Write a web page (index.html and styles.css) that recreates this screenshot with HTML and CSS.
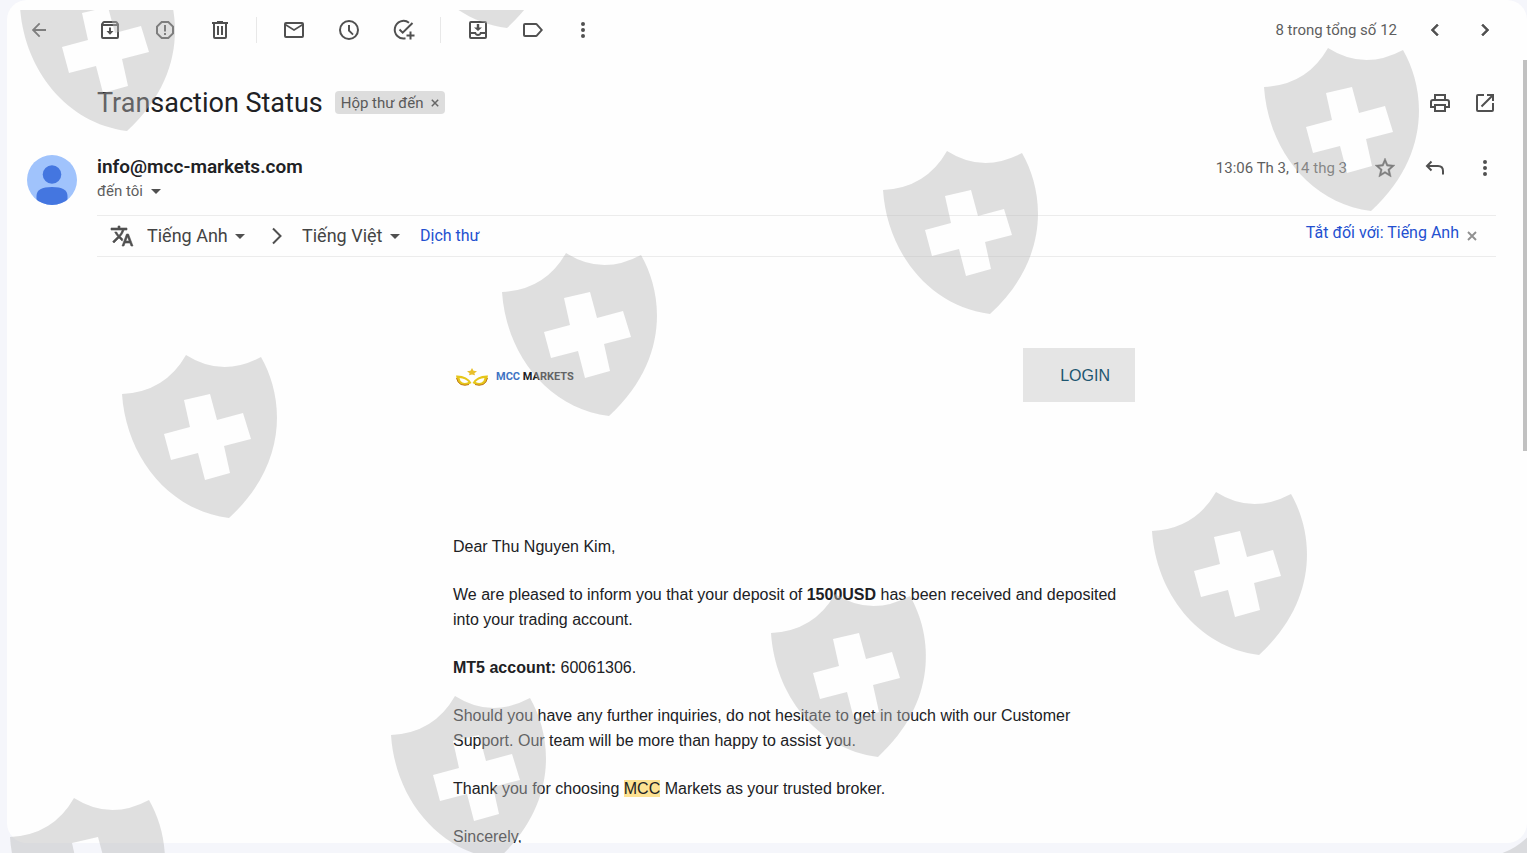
FILE: index.html
```
<!DOCTYPE html>
<html lang="vi">
<head>
    <meta charset="UTF-8">
    <meta name="viewport" content="width=device-width, initial-scale=1.0">
    <title>Transaction Status</title>
    <link rel="stylesheet" href="styles.css">
</head>
<body>
    <main class="card">
        <div class="toolbar">
            <button class="icon-btn back" aria-label="Quay lại"><svg class="icon" viewBox="0 0 24 24"><path d="M19 11H8.4l4.9-4.9L12 4.8 4.8 12l7.2 7.2 1.3-1.3L8.4 13H19z"/></svg></button>
            <button class="icon-btn" aria-label="Lưu trữ"><svg class="icon" viewBox="0 0 24 24"><path d="M20.5 5.2 19.2 3.5Q18.7 3 18 3H6q-.7 0-1.2.5L3.5 5.2Q3 5.7 3 6.5V19a2 2 0 0 0 2 2h14a2 2 0 0 0 2-2V6.5q0-.8-.5-1.3zM6.2 5h11.600l.8 1H5.400zM5 19V8h14v11zm6-9.500h2V13h2.500L12 16.800 8.500 13H11z"/></svg></button>
            <button class="icon-btn" aria-label="Báo cáo thư rác"><svg class="icon" viewBox="0 0 24 24"><path d="M8.300 3h7.400L21 8.300v7.400L15.700 21H8.300L3 15.700V8.300zm.8 2L5 9.100v5.800L9.100 19h5.800l4.100-4.100V9.100L14.900 5zM11 7h2v6.500h-2zm0 8h2v2h-2z"/></svg></button>
            <button class="icon-btn" aria-label="Xóa"><svg class="icon" viewBox="0 0 24 24"><path d="M15 4V3H9v1H4v2h1v13a2 2 0 0 0 2 2h10a2 2 0 0 0 2-2V6h1V4zm2 15H7V6h10zM9 8h2v9H9zm4 0h2v9h-2z"/></svg></button>
            <span class="separator"></span>
            <button class="icon-btn" aria-label="Đánh dấu là chưa đọc"><svg class="icon" viewBox="0 0 24 24"><path d="M20 4H4a2 2 0 0 0-2 2v12a2 2 0 0 0 2 2h16a2 2 0 0 0 2-2V6a2 2 0 0 0-2-2zm0 2-8 5-8-5zm0 12H4V8l8 5 8-5z"/></svg></button>
            <button class="icon-btn" aria-label="Tạm ẩn"><svg class="icon" viewBox="0 0 24 24"><path d="M12 2a10 10 0 1 0 0 20 10 10 0 0 0 0-20zm0 18a8 8 0 1 1 0-16 8 8 0 0 1 0 16zM11 7h2v5.200l3.700 3.700-1.300 1.300L11 13z"/></svg></button>
            <button class="icon-btn" aria-label="Thêm vào Việc cần làm"><svg class="icon stroked" viewBox="0 0 24 24"><path d="M17 4.800A8.800 8.800 0 1 0 13.500 20.300M7.500 11.500l3.200 3.200L20.500 5M18.500 13.500v8M14.500 17.500h8"/></svg></button>
            <span class="separator"></span>
            <button class="icon-btn" aria-label="Di chuyển tới"><svg class="icon" viewBox="0 0 24 24"><path d="M19 3H5a2 2 0 0 0-2 2v14a2 2 0 0 0 2 2h14a2 2 0 0 0 2-2V5a2 2 0 0 0-2-2zm0 16H5v-3h3.600a4 4 0 0 0 6.800 0H19zm0-5h-5a2 2 0 0 1-4 0H5V5h14zm-3-4.500h-2.800V6h-2.400v3.500H8l4 3.500z"/></svg></button>
            <button class="icon-btn" aria-label="Nhãn"><svg class="icon" viewBox="0 0 24 24"><path d="M16.500 5.800Q16 5 15 5H4a2 2 0 0 0-2 2v10a2 2 0 0 0 2 2h11q1 0 1.500-.8L22 12zM15 17H4V7h11l4.500 5z"/></svg></button>
            <button class="icon-btn narrow" aria-label="Khác"><svg class="icon" viewBox="0 0 24 24"><path d="M12 8a2 2 0 1 0 0-4 2 2 0 0 0 0 4zm0 2a2 2 0 1 0 0 4 2 2 0 0 0 0-4zm0 6a2 2 0 1 0 0 4 2 2 0 0 0 0-4z"/></svg></button>
            <span class="meta push">8 trong tổng số 12</span>
            <button class="icon-btn medium" aria-label="Mới hơn"><svg class="icon" viewBox="0 0 24 24"><path d="M15.400 7.400 14 6l-6 6 6 6 1.400-1.400-4.600-4.600z" stroke="currentColor" stroke-width=".6"/></svg></button>
            <button class="icon-btn medium" aria-label="Cũ hơn"><svg class="icon" viewBox="0 0 24 24"><path d="M8.600 7.400 10 6l6 6-6 6-1.400-1.400 4.600-4.600z" stroke="currentColor" stroke-width=".6"/></svg></button>
        </div>

        <div class="subject">
            <h1>Transaction Status</h1>
            <span class="chip">Hộp thư đến <button class="chip-close" aria-label="Xóa nhãn"><svg viewBox="0 0 8 8"><path d="M.8.8l6.400 6.400M7.200.8L.8 7.200"/></svg></button></span>
            <button class="icon-btn narrow push" aria-label="In"><svg class="icon" viewBox="0 0 24 24"><path d="M19 8h-1V3H6v5H5a3 3 0 0 0-3 3v6h4v4h12v-4h4v-6a3 3 0 0 0-3-3zM8 5h8v3H8zm8 14H8v-4h8zm4-4h-2v-2H6v2H4v-4q0-1 1-1h14q1 0 1 1z"/></svg></button>
            <button class="icon-btn narrow" aria-label="Mở trong cửa sổ mới"><svg class="icon" viewBox="0 0 24 24"><path d="M19 19H5V5h6V3H5a2 2 0 0 0-2 2v14a2 2 0 0 0 2 2h14a2 2 0 0 0 2-2v-7h-2zM14 3v2h3.600l-9.800 9.800 1.400 1.400L19 6.400V10h2V3z"/></svg></button>
        </div>

        <div class="sender">
            <svg class="avatar" viewBox="0 0 50 50">
                <clipPath id="round"><circle cx="25" cy="25" r="25"/></clipPath>
                <g clip-path="url(#round)">
                    <rect width="50" height="50" fill="#a0c3fc"/>
                    <circle cx="25" cy="19.500" r="9.300" fill="#4476e0"/>
                    <path d="M9.500 50V41q0-9 15.500-9t15.500 9v9z" fill="#4476e0"/>
                </g>
            </svg>
            <div class="who">
                <div class="from">info@mcc-markets.com</div>
                <div class="to">đến tôi <svg class="caret" viewBox="0 0 10 5"><path d="M0 0h10L5 5z"/></svg></div>
            </div>
            <div class="actions">
                <span class="meta">13:06 Th 3, 14 thg 3</span>
                <button class="icon-btn medium" aria-label="Gắn dấu sao"><svg class="icon" viewBox="0 0 24 24"><path d="M22 9.200l-7.200-.6L12 2 9.200 8.600 2 9.200l5.500 4.800L5.800 21l6.200-3.700 6.200 3.700-1.600-7zM12 15.400l-3.800 2.300 1-4.300-3.300-2.900 4.400-.4L12 6.100l1.700 4 4.400.4-3.300 2.900 1 4.300z" stroke="currentColor" stroke-width=".4"/></svg></button>
                <button class="icon-btn medium" aria-label="Trả lời"><svg class="icon stroked" viewBox="0 0 24 24"><path d="M8.500 5.500L4 10l4.500 4.500M4 10h11q5 0 5 5v3.500"/></svg></button>
                <button class="icon-btn medium" aria-label="Khác"><svg class="icon" viewBox="0 0 24 24"><path d="M12 8a2 2 0 1 0 0-4 2 2 0 0 0 0 4zm0 2a2 2 0 1 0 0 4 2 2 0 0 0 0-4zm0 6a2 2 0 1 0 0 4 2 2 0 0 0 0-4z"/></svg></button>
            </div>
        </div>

        <div class="translate">
            <svg class="icon" viewBox="0 0 24 24"><path d="M12.900 15.100l-2.600-2.500a17.500 17.500 0 0 0 3.800-6.600H17V4h-7V2H8v2H1v2h11.200A15.700 15.700 0 0 1 9 11.400 15.700 15.700 0 0 1 6.700 8h-2a17.600 17.600 0 0 0 3 4.600l-5.100 5L4 19l5-5 3.100 3.100zM18.500 10h-2L12 22h2l1.100-3h4.800l1.100 3h2zm-2.600 7l1.600-4.300 1.600 4.300z" stroke="currentColor" stroke-width=".6"/></svg>
            <label class="lang"><select aria-label="Ngôn ngữ nguồn"><option>Tiếng Anh</option></select><svg class="caret" viewBox="0 0 10 5"><path d="M0 0h10L5 5z"/></svg></label>
            <svg class="icon stroked arrow" viewBox="0 0 24 24"><path d="M8 4.500l7.500 7.500L8 19.500"/></svg>
            <label class="lang"><select aria-label="Ngôn ngữ đích"><option>Tiếng Việt</option></select><svg class="caret" viewBox="0 0 10 5"><path d="M0 0h10L5 5z"/></svg></label>
            <a class="link" href="#">Dịch thư</a>
            <div class="turn-off">
                <a class="link" href="#">Tắt đối với: Tiếng Anh</a>
                <button class="close" aria-label="Đóng"><svg viewBox="0 0 8 8"><path d="M.8.8l6.400 6.400M7.200.8L.8 7.200"/></svg></button>
            </div>
        </div>

        <article class="mail">
            <header class="mail-head">
                <div class="brand">
                    <svg class="brand-mark" viewBox="0 0 32 18">
                        <path d="M16 0l1.500 2.800 3.500.4-2.600 2 .6 2-3-.8-3 .8.600-2-2.600-2 3.500-.4z" fill="#e9bf2c"/>
                        <path fill-rule="evenodd" d="M0 7.500Q11 7 15.500 15 10 18.500 5 16.500 1 14.500 0 7.500zM3.500 10Q4 13.500 6.500 14.500 9 15.500 12.500 14 9.500 10.500 3.500 10z" fill="#e6c619"/>
                        <path fill-rule="evenodd" d="M32 7.500Q21 7 16.500 15 22 18.500 27 16.500 31 14.500 32 7.500zM28.500 10Q28 13.500 25.500 14.500 23 15.500 19.500 14 22.500 10.500 28.500 10z" fill="#e6c619"/>
                        <path d="M.5 10Q1.500 15 5 16.500 9 18 13 16.500M31.500 10Q30.500 15 27 16.500 23 18 19 16.500" fill="none" stroke="#c07a16" stroke-width="1"/>
                    </svg>
                    <span class="brand-name"><span class="blue">MCC</span> MARKETS</span>
                </div>
                <a class="login" href="#">LOGIN</a>
            </header>
            <p>Dear Thu Nguyen Kim,</p>
            <p>We are pleased to inform you that your deposit of <b>1500USD</b> has been received and deposited into your trading account.</p>
            <p><b>MT5 account:</b> 60061306.</p>
            <p>Should you have any further inquiries, do not hesitate to get in touch with our Customer Support. Our team will be more than happy to assist you.</p>
            <p>Thank you for choosing <mark>MCC</mark> Markets as your trusted broker.</p>
            <p>Sincerely,</p>
        </article>
    </main>
    <div class="scroll-thumb"></div>

    <!-- shield watermark over the whole window -->
    <svg class="watermark" aria-hidden="true">
        <defs>
            <path id="shield" fill-rule="evenodd" d="M0 39Q43 37 64 0 100 23 139 2C162 42 167 108 107 163 45 155 4 100 0 39zM62 45 88 39 95 65 121 58 129 84 102 91 108 118 83 125 76 98 49 105 42 79 68 72z"/>
        </defs>
        <use href="#shield" x="20" y="-32"/>
        <use href="#shield" x="400" y="-135"/>
        <use href="#shield" x="1264" y="48"/>
        <use href="#shield" x="883" y="151"/>
        <use href="#shield" x="502" y="253"/>
        <use href="#shield" x="122" y="355"/>
        <use href="#shield" x="1152" y="492"/>
        <use href="#shield" x="771" y="594"/>
        <use href="#shield" x="391" y="696"/>
        <use href="#shield" x="10" y="798"/>
        <use href="#shield" x="1477" y="819"/>
    </svg>
</body>
</html>
```
FILE: styles.css
```
* {
    box-sizing: border-box;
}

body {
    margin: 0;
    height: 100vh;
    overflow: hidden;
    background-color: #f5f6fb;
    color: #202124;
    font-family: Roboto, "Noto Sans", sans-serif;
    font-size: 15px;
}

button {
    padding: 0;
    border: none;
    background: none;
    color: inherit;
    cursor: pointer;
}

.card {
    height: calc(100vh - 10px);
    margin-left: 7px;
    overflow: hidden;
    background-color: #fefefe;
    border-radius: 20px;
}

.icon-btn {
    display: flex;
    flex: none;
    justify-content: center;
    align-items: center;
    width: 55px;
    height: 40px;
    color: #505050;
}

.icon-btn.narrow {
    width: 45px;
}

.icon-btn.medium {
    width: 50px;
}

.icon {
    flex: none;
    width: 24px;
    height: 24px;
    fill: currentColor;
}

.stroked {
    fill: none;
    stroke: currentColor;
    stroke-width: 2;
}

.push {
    margin-left: auto;
}

.meta {
    margin-right: 13px;
    color: #5e5e5e;
}

.caret {
    width: 10px;
    height: 5px;
    fill: #505050;
}

/* toolbar */
.toolbar {
    display: flex;
    align-items: center;
    height: 60px;
    padding: 0 17px 0 12px;
}

.icon-btn.back {
    width: 40px;
    margin-right: 23px;
}

.separator {
    width: 1px;
    height: 26px;
    margin: 0 9px;
    background-color: #e8e8e8;
}

/* subject */
.subject {
    display: flex;
    align-items: center;
    height: 85px;
    padding: 0 20px 0 90px;
}

h1 {
    margin: 0;
    font-size: 27px;
    font-weight: 400;
}

.chip {
    display: flex;
    align-items: center;
    height: 23px;
    margin-left: 12px;
    padding: 0 6px;
    background-color: #dddddd;
    border-radius: 4px;
    color: #5a5a5a;
}

.chip-close,
.close {
    display: flex;
    margin-left: 8px;
    stroke: #666;
    stroke-width: 1.5;
}

.chip-close svg {
    width: 8px;
    height: 8px;
}

/* sender */
.sender {
    display: flex;
    height: 70px;
    padding: 10px 17px 0 20px;
}

.avatar {
    width: 50px;
    height: 50px;
    margin-right: 20px;
}

.who {
    flex: 1;
    line-height: 24px;
}

.from {
    font-size: 19px;
    font-weight: 600;
}

.to {
    display: flex;
    align-items: center;
    gap: 8px;
    color: #5e5e5e;
}

.actions {
    display: flex;
    align-items: center;
    height: 25px;
}

/* translate bar */
.translate {
    display: flex;
    align-items: center;
    height: 42px;
    margin: 0 31px 0 90px;
    padding: 0 19px 0 13px;
    border-top: 1px solid #ececec;
    border-bottom: 1px solid #ececec;
    color: #505050;
}

.lang {
    display: flex;
    align-items: center;
    gap: 7px;
    margin-left: 13px;
}

select {
    appearance: none;
    padding: 0 0 2px;
    border: none;
    background: none;
    color: #444;
    font: 18px Roboto, "Noto Sans", sans-serif;
}

.arrow {
    margin-left: 20px;
}

.link {
    padding-bottom: 2px;
    color: #2350d0;
    font-size: 16px;
    text-decoration: none;
}

.lang + .link {
    margin-left: 20px;
}

.turn-off {
    display: flex;
    align-items: center;
    margin-left: auto;
    padding-bottom: 5px;
}

.close {
    padding-top: 5px;
    stroke: #909090;
}

.close svg {
    width: 10px;
    height: 10px;
}

/* mail */
.mail {
    box-sizing: content-box;
    max-width: 682px;
    margin: 0 auto;
    padding: 91px 36px 0 90px;
    font-family: "Liberation Sans", Arial, sans-serif;
    font-size: 16px;
    line-height: 25px;
}

.mail-head {
    display: flex;
    justify-content: space-between;
    align-items: center;
    margin-bottom: 132px;
}

.brand {
    display: flex;
    align-items: center;
    gap: 8px;
    padding: 3px 0 0 3px;
}

.brand-mark {
    width: 32px;
    height: 18px;
}

.brand-name {
    font: bold 11px Roboto, sans-serif;
}

.blue {
    color: #3f74c4;
}

.login {
    padding: 15px 25px 14px 37px;
    background-color: #e5e5e5;
    color: #1d5670;
    text-decoration: none;
}

p {
    margin: 0 0 23px;
}

mark {
    background-color: #fde293;
    color: inherit;
}

.scroll-thumb {
    position: absolute;
    top: 60px;
    right: 0;
    width: 4px;
    height: 391px;
    background-color: #c1c1c1;
}

.watermark {
    position: absolute;
    top: 0;
    left: 0;
    width: 100%;
    height: 100%;
    clip-path: inset(10px 0 0 10px);
    fill: #b9b9b9;
    fill-opacity: .44;
    pointer-events: none;
}
```
